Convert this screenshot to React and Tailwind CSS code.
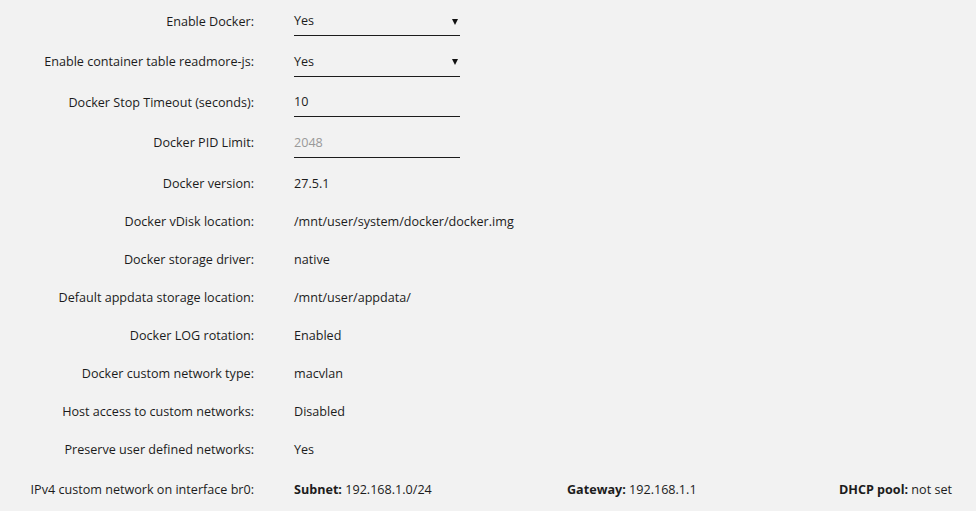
import React from "react";

const Arrow = () => (
  <svg width="6" height="6" viewBox="0 0 6 6" className="mr-[2px]">
    <path d="M0 0H6L3 6Z" fill="#111" />
  </svg>
);

function InputRow({ label, value, select, placeholder }) {
  return (
    <div className="flex h-[40.5px] items-center">
      <div className="w-[254px] text-right">{label}</div>
      <div className="ml-[40px] flex h-[28px] w-[166px] items-center justify-between border-b border-[#1c1c1c]">
        <span className={placeholder ? "text-[#999]" : ""}>{value}</span>
        {select && <Arrow />}
      </div>
    </div>
  );
}

function TextRow({ label, value }) {
  return (
    <div className="flex h-[38px] items-center">
      <div className="w-[254px] text-right">{label}</div>
      <div className="ml-[40px]">{value}</div>
    </div>
  );
}

export default function App() {
  return (
    <div
      className="min-h-[511px] w-[976px] bg-[#f2f2f2] pt-[2px] text-[12.6px] text-[#1c1c1c]"
      style={{ fontFamily: '"Open Sans", "Noto Sans", sans-serif' }}
    >
      <InputRow label="Enable Docker:" value="Yes" select />
      <InputRow label="Enable container table readmore-js:" value="Yes" select />
      <InputRow label="Docker Stop Timeout (seconds):" value="10" />
      <InputRow label="Docker PID Limit:" value="2048" placeholder />
      <div className="mt-[1px]">
        <TextRow label="Docker version:" value="27.5.1" />
        <TextRow label="Docker vDisk location:" value="/mnt/user/system/docker/docker.img" />
        <TextRow label="Docker storage driver:" value="native" />
        <TextRow label="Default appdata storage location:" value="/mnt/user/appdata/" />
        <TextRow label="Docker LOG rotation:" value="Enabled" />
        <TextRow label="Docker custom network type:" value="macvlan" />
        <TextRow label="Host access to custom networks:" value="Disabled" />
        <TextRow label="Preserve user defined networks:" value="Yes" />
      </div>
      <div className="mt-[2px] flex h-[38px] items-center">
        <div className="w-[254px] text-right">IPv4 custom network on interface br0:</div>
        <div className="ml-[40px] flex flex-1 items-center pr-[24px]">
          <span className="w-[273px]">
            <b className="font-bold">Subnet:</b> 192.168.1.0/24
          </span>
          <span>
            <b className="font-bold">Gateway:</b> 192.168.1.1
          </span>
          <span className="ml-auto">
            <b className="font-bold">DHCP pool:</b> not set
          </span>
        </div>
      </div>
    </div>
  );
}
